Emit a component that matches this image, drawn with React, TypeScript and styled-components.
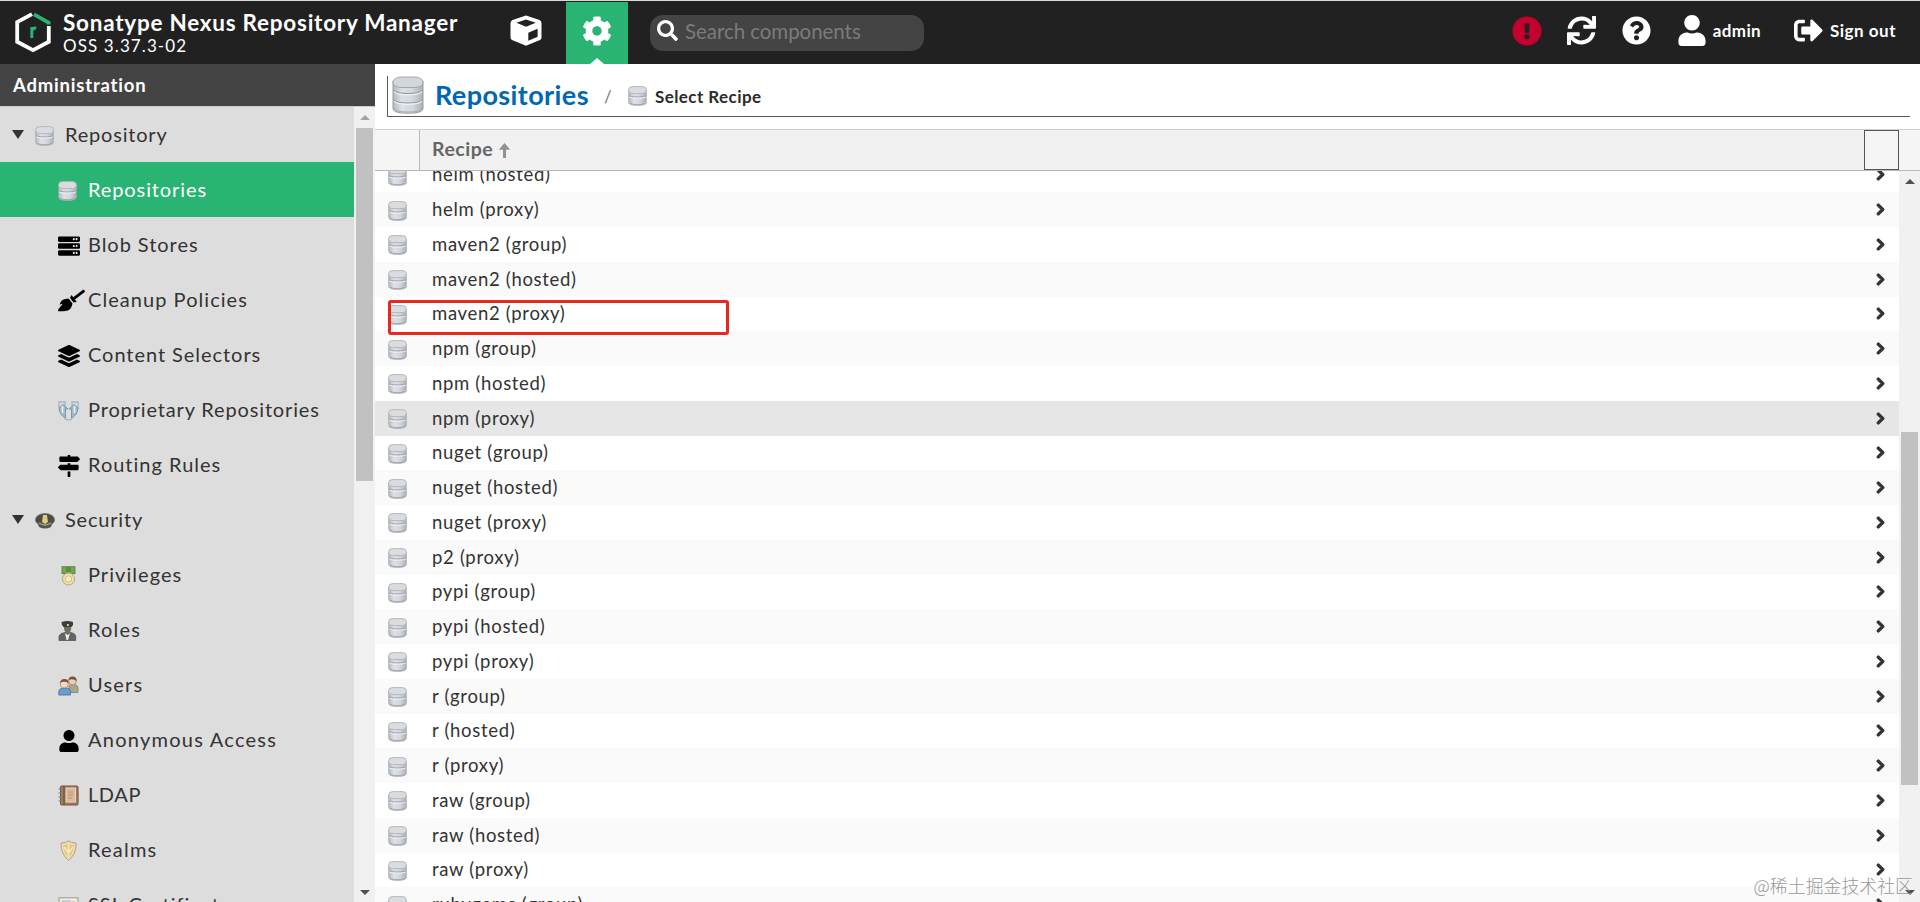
import React from 'react';
import styled, { createGlobalStyle } from 'styled-components';
import {
  FaBroom, FaChevronRight, FaCog, FaExclamationCircle, FaLayerGroup, FaMapSigns,
  FaQuestionCircle, FaSearch, FaServer, FaSignOutAlt, FaSync, FaUser,
} from 'react-icons/fa';

const GlobalStyle = createGlobalStyle`
  * { box-sizing: border-box; }
  body { margin: 0; overflow: hidden; background: #fff; font-family: Lato, "Noto Sans CJK SC", sans-serif; color: #333; }
  svg { display: block; flex: none; }
`;

const Page = styled.div`
  position: relative;
  width: 1920px;
  height: 902px;
  display: flex;
  flex-direction: column;
  overflow: hidden;
`;
const Label = styled.span<{ $size: number; $weight?: number; $spacing?: number }>`
  font-size: ${p => p.$size}px;
  font-weight: ${p => p.$weight ?? 400};
  letter-spacing: ${p => p.$spacing ?? 0}px;
  white-space: nowrap;
`;

/* ---------- top bar ---------- */
const TopBar = styled.header`
  flex: none;
  height: 64px;
  display: flex;
  border-top: 1px solid #d3dbd7;
  background: #212121;
  color: #fff;
`;
const Brand = styled.div`
  width: 495px;
  padding: 10px 0 0 14px;
  display: flex;
  gap: 11px;
`;
const BrandText = styled.div`
  display: flex;
  flex-direction: column;
  line-height: 24px;
`;
const Version = styled(Label)`
  line-height: 21px;
`;
const ModeButton = styled.div<{ $active?: boolean }>`
  position: relative;
  width: ${p => (p.$active ? 62 : 71)}px;
  margin-top: ${p => (p.$active ? 1 : 0)}px;
  padding: ${p => (p.$active ? '14px 0 0 16px' : '14px 0 0 15px')};
  background: ${p => (p.$active ? '#29b473' : 'transparent')};
`;
const Pointer = styled.i`
  position: absolute;
  left: 24px;
  bottom: 0;
  border: 7px solid transparent;
  border-top: 0;
  border-bottom: 6px solid #fff;
`;
const SearchBox = styled.div`
  width: 274px;
  height: 36px;
  margin: 14px 0 0 22px;
  padding-left: 7px;
  display: flex;
  align-items: center;
  gap: 7px;
  border-radius: 13px;
  background: #444;
  color: #7b7b7b;
  line-height: 32px;
  svg { color: #fff; margin-top: -5px; }
  span { margin-top: -4px; }
`;
const Actions = styled.div`
  margin-left: auto;
  padding: 0 24px 3px 0;
  height: 62px;
  display: flex;
  align-items: center;
`;
const Action = styled.div<{ $gap: number; $color?: string }>`
  display: flex;
  align-items: center;
  gap: 7px;
  margin-left: ${p => p.$gap}px;
  color: ${p => p.$color ?? '#fff'};
`;

/* ---------- side navigation ---------- */
const Body = styled.div`
  flex: 1;
  min-height: 0;
  display: flex;
`;
const Side = styled.aside`
  width: 375px;
  display: flex;
  flex-direction: column;
  background: #ddd;
`;
const SideTitle = styled.div`
  flex: none;
  height: 42px;
  padding: 1px 0 0 13px;
  line-height: 40px;
  background: #444;
  color: #fff;
`;
const SideScroll = styled.div`
  flex: 1;
  min-height: 0;
  display: flex;
  border-top: 1px solid #ccc;
`;
const Menu = styled.nav`
  width: 354px;
  overflow: hidden;
`;
const MenuRow = styled.div<{ $child?: boolean; $active?: boolean }>`
  height: 55px;
  padding-left: ${p => (p.$child ? 58 : 12)}px;
  padding-bottom: 2px;
  display: flex;
  align-items: center;
  background: ${p => (p.$active ? '#29b473' : 'transparent')};
  color: ${p => (p.$active ? '#fff' : '#333')};
`;
const MenuIcon = styled.span`
  width: 30px;
  margin-top: 4px;
  display: flex;
  color: #000;
`;
const Caret = styled.i`
  width: 23px;
  margin-top: 2px;
  &::before {
    content: "";
    display: block;
    width: 0;
    border: 6.5px solid transparent;
    border-top: 9px solid #333;
    border-bottom: 0;
  }
`;

/* ---------- scroll bars ---------- */
const Track = styled.div`
  width: 21px;
  flex: none;
  padding: 8px 0 7px;
  display: flex;
  flex-direction: column;
  align-items: center;
  background: #f1f1f1;
`;
const Arrow = styled.i<{ $down?: boolean; $dim?: boolean }>`
  border: 5px solid transparent;
  ${p => (p.$down
    ? 'border-top: 5px solid #505050; border-bottom: 0; margin-top: auto;'
    : `border-bottom: 5px solid ${p.$dim ? '#a3a3a3' : '#505050'}; border-top: 0;`)}
`;
const Thumb = styled.div<{ $top: number }>`
  width: 17px;
  height: 353px;
  margin-top: ${p => p.$top}px;
  background: #c1c1c1;
`;

/* ---------- main content ---------- */
const Main = styled.main`
  flex: 1;
  min-width: 0;
  display: flex;
  flex-direction: column;
`;
const Crumbs = styled.div`
  flex: none;
  height: 41px;
  margin: 12px 10px 12px 12px;
  padding-left: 4px;
  display: flex;
  align-items: center;
  border: solid #5a5a5a;
  border-width: 0 0 1px 1px;
`;
const BigIcon = styled.span`
  margin-top: -2px;
`;
const CrumbTitle = styled(Label)`
  width: 169px;
  margin: -4px 0 0 11px;
  color: #0067b3;
`;
const Slash = styled.span`
  width: 24px;
  font-size: 17px;
  color: #777;
`;
const CrumbLeaf = styled(Label)`
  margin-left: 8px;
  color: #2b2b2b;
`;
const GridHead = styled.div`
  flex: none;
  height: 42px;
  display: flex;
  border: solid #d0d0d0;
  border-width: 1px 0;
  border-bottom-color: #b8b8b8;
  background: #f5f5f5;
`;
const IconHead = styled.div`
  width: 45px;
  border-right: 1px solid #bcbcbc;
`;
const RecipeHead = styled.div`
  flex: 1;
  padding: 0 0 3px 12px;
  display: flex;
  align-items: center;
  gap: 5px;
  background: #f1f1f1;
  color: #666;
  svg { margin-top: 3px; }
`;
const HeadButton = styled.div`
  width: 35px;
  margin-right: 21px;
  border: 1px solid #555;
`;
const GridBody = styled.div`
  flex: 1;
  min-height: 0;
  display: flex;
`;
const Rows = styled.div`
  flex: 1;
  height: 731px;
  overflow: hidden;
`;
const Shift = styled.div`
  margin-top: -13.4px;
`;
const Row = styled.div<{ $tone: string }>`
  height: 34.76px;
  padding-left: 13px;
  padding-right: 12px;
  display: flex;
  align-items: center;
  background: ${p => p.$tone};
  color: #333;
`;
const RowIcon = styled.span`
  width: 44px;
  padding-top: 2px;
`;
const RowText = styled(Label)`
  flex: 1;
  margin-top: -1px;
`;
const Highlight = styled.div`
  position: absolute;
  left: 388px;
  top: 300px;
  width: 341px;
  height: 35px;
  border: 3px solid #e8281f;
  border-radius: 3px;
`;
const Watermark = styled.div`
  position: absolute;
  right: 7px;
  bottom: 4px;
  font: 300 17.9px/26px "Noto Sans CJK SC", sans-serif;
  color: #999;
  white-space: nowrap;
`;

/* ---------- drawings ---------- */
const Gradients = () => (
  <svg width="0" height="0" style={{ position: 'absolute' }}>
    <defs>
      <linearGradient id="steel" x1="0" x2="1">
        <stop offset="0" stopColor="#b4b8c0" />
        <stop offset=".3" stopColor="#dde1e7" />
        <stop offset=".65" stopColor="#d2d6dd" />
        <stop offset="1" stopColor="#acb0b8" />
      </linearGradient>
    </defs>
  </svg>
);
const Database = () => (
  <svg width="19" height="20" viewBox="0 0 19 20">
    <path d="M.7 4V16.5Q1 19.4 9.5 19.4T18.3 16.5V4Z" fill="url(#steel)" stroke="#a9abae" strokeWidth=".8" />
    <rect x=".7" y=".6" width="17.6" height="7" rx="4" ry="3" fill="#dadde0" stroke="#b1b3b5" strokeWidth=".9" />
    <path d="M1 9.4Q2 11 9.5 11T18 9.4" fill="none" stroke="#989da5" strokeWidth="1" />
    <path d="M1.4 11Q3 12.2 9.5 12.2T17.6 11" fill="none" stroke="#f1f3f6" strokeWidth="1" />
    <path d="M2 17.2Q4 18.7 9.5 18.7T17 17.2" fill="none" stroke="#9da1a8" strokeWidth=".9" />
  </svg>
);
const LargeDatabase = () => (
  <svg width="32" height="38" viewBox="0 0 32 38">
    <path d="M1 5V33Q2 37.2 16 37.2T31 33V5Z" fill="url(#steel)" stroke="#999ca0" />
    <rect x="1" y="1" width="30" height="10.5" rx="9" ry="4.8" fill="#d3d6da" stroke="#a5a8ac" />
    <path d="M1.5 14Q4 17.5 16 17.5T30.5 14M1.5 23.5Q4 27 16 27T30.5 23.5" fill="none" stroke="#8f949c" strokeWidth="1.1" />
    <path d="M2 15.5Q4 18.8 16 18.8T30 15.5M2 25Q4 28.3 16 28.3T30 25" fill="none" stroke="#f2f4f7" strokeWidth="1.2" />
    <path d="M2 33Q5 36 16 36T30 33" fill="none" stroke="#aaadb3" />
  </svg>
);
const Logo = () => (
  <svg width="38" height="42" viewBox="0 0 38 42">
    <path d="M18 3.2 3.2 11.2V30.8L19 39.2 34.8 30.8V15" fill="none" stroke="#fff" strokeWidth="3.8" />
    <path d="M20 3.3 34.6 11.6V13.5" fill="none" stroke="#29b473" strokeWidth="3.8" />
    <path d="M17.8 27V16M17.8 20Q18.5 16.6 22.3 17" fill="none" stroke="#29b473" strokeWidth="2.9" />
  </svg>
);
const Cube = () => (
  <svg width="32" height="31" viewBox="0 0 32 31">
    <path d="M16 .5 29.5 5Q31.5 6 31.5 8V22.5Q31.5 24 30 25L16 30.7 2 25Q.5 24 .5 22.5V8Q.5 6 2.5 5Z" fill="#fff" />
    <path d="M6.5 7.8 16 4.5 25.8 7.8 16 11.8ZM18.3 17.8 27.6 13.8V21.8L18.3 25.8Z" fill="#212121" />
  </svg>
);
const SortArrow = () => (
  <svg width="13" height="15" viewBox="0 0 13 15">
    <path d="M6.5 15V3" stroke="#929292" strokeWidth="3" />
    <path d="M.8 6.8 6.5 0 12.2 6.8Z" fill="#929292" />
  </svg>
);
const Hands = () => (
  <svg width="21" height="20" viewBox="0 0 21 20">
    <g fill="none" stroke="#a8b8c0" strokeWidth="1.4">
      <path d="M1 7V1H7V5M14 5V1H20V8M6.5 17.5Q10.5 20.5 14.5 17.5" />
    </g>
    <path d="M1 7 5 3.5 10 8 7.5 8V17Q1.5 14 1 7ZM20 7 16 3.5 11 8 13.5 8V17Q19.5 14 20 7Z" fill="#9ebdca" stroke="#678c9d" strokeWidth=".8" />
    <path d="M4.5 5V12M16.5 5V12" stroke="#eef7fa" strokeWidth="1.5" />
  </svg>
);
const Cap = () => (
  <svg width="20" height="16" viewBox="0 0 20 16">
    <ellipse cx="10" cy="6.8" rx="9.7" ry="6.3" fill="#4b4b46" stroke="#777" strokeWidth=".7" />
    <path d="M2.5 9Q10 6 17.5 9L16 14Q10 17 4 14Z" fill="#555649" />
    <path d="M8 2H12L13 9 10 11 7 9Z" fill="#d8ce7f" />
    <path d="M4 10Q10 14 16 10" fill="none" stroke="#a7a38a" strokeWidth="1.5" />
  </svg>
);
const Medal = () => (
  <svg width="21" height="20" viewBox="0 0 21 20">
    <rect x="4" y=".7" width="13" height="7" fill="#7e9f5a" stroke="#58793b" strokeWidth=".8" />
    <path d="M8 1H13V6H8Z" fill="#4f9342" />
    <circle cx="10.5" cy="13" r="6" fill="#efe3ad" stroke="#b3a773" />
    <circle cx="10.5" cy="13" r="3.2" fill="#f6edc5" stroke="#cfbd82" />
  </svg>
);
const Officer = () => (
  <svg width="21" height="20" viewBox="0 0 21 20">
    <path d="M1 19.5V15Q2 12 7 11.5H12Q17 12 17.7 15V19.5Z" fill="#626466" stroke="#4b4c4e" strokeWidth=".7" />
    <path d="M6 5H13Q14 11.5 9.5 12.5Q5.5 11 6 5Z" fill="#746c62" />
    <path d="M3.5 1Q9.5-1 15 1V4L13.5 6H5.5L4 4Z" fill="#3c3d3d" />
    <path d="M9 3H11L10.5 5H9Z" fill="#d5d2b9" />
    <path d="M7 12 9.7 14 12 12 10 19H8.5Z" fill="#eee" />
  </svg>
);
const People = () => (
  <svg width="21" height="20" viewBox="0 0 21 20">
    <path d="M11 15V10Q12 8 16 8.5 20 9 20 12V16.5H13Z" fill="#a5a98a" stroke="#74785c" strokeWidth=".7" />
    <circle cx="14.5" cy="5" r="3.9" fill="#edcdb5" stroke="#966f52" strokeWidth=".7" />
    <path d="M10.5 4Q11 0 15 .5 19 1 18.5 5Q15 2 10.5 4Z" fill="#77543c" />
    <path d="M.8 19V15Q1.5 12 6.5 12 12 12 12.5 15V19Z" fill="#6c9bcd" stroke="#456f9e" strokeWidth=".8" />
    <circle cx="6.3" cy="8" r="4" fill="#f2d7c1" stroke="#9d775b" strokeWidth=".7" />
    <path d="M2 7Q2.5 3 6.5 3T10.6 7Q6 4.5 2 7Z" fill="#8a4d38" />
  </svg>
);
const Notebook = () => (
  <svg width="21" height="21" viewBox="0 0 21 21">
    <rect x="2.5" y="1" width="17.5" height="19" rx="1" fill="#9e7b5c" stroke="#715943" />
    <rect x="8" y="3" width="9.5" height="14" fill="#d9b99c" stroke="#ead3bd" />
    <path d="M10 7H15M10 10H15M10 13H14" stroke="#bb9273" />
    <path d="M6 1V20" stroke="#6c5137" strokeWidth="1.2" />
    <path d="M.5 4H4M.5 8H4M.5 12H4M.5 16H4" stroke="#858078" strokeWidth="1.2" />
    <path d="M20 8V12" stroke="#c65945" /><path d="M20 13V17" stroke="#5c9465" />
  </svg>
);
const Shield = () => (
  <svg width="21" height="21" viewBox="0 0 21 21">
    <path d="M10.5.8Q13 3 18 3.2 18.5 14 10.5 20.3 2.5 14 3 3.2 8 3 10.5.8Z" fill="#eadfb6" stroke="#afa17c" />
    <path d="M10.5 3.5Q13 5 16 5.2 15.5 13 10.5 17.5 5.5 13 5 5.2 8 5 10.5 3.5Z" fill="#e5c77e" />
    <path d="M10.5 4V17M6 7 10.5 13 15 7" fill="none" stroke="#f6ebc6" strokeWidth="1.4" />
  </svg>
);
const Certificate = () => (
  <svg width="21" height="18" viewBox="0 0 21 18">
    <rect x="1" y=".8" width="19" height="15.5" fill="#eeece5" stroke="#9b9b93" />
    <path d="M4 4H13M4 7H12" stroke="#aaa" /><circle cx="15.5" cy="7" r="2.8" fill="#d6bf76" />
  </svg>
);

const menu: { text: string; icon: React.ReactNode; group?: boolean; active?: boolean; spacing?: number }[] = [
  { text: 'Repository', icon: <Database />, group: true, spacing: 0.8 },
  { text: 'Repositories', icon: <Database />, active: true, spacing: 0.9 },
  { text: 'Blob Stores', icon: <FaServer size={22} /> },
  { text: 'Cleanup Policies', icon: <FaBroom size={27} />, spacing: 1.05 },
  { text: 'Content Selectors', icon: <FaLayerGroup size={22} /> },
  { text: 'Proprietary Repositories', icon: <Hands />, spacing: 0.85 },
  { text: 'Routing Rules', icon: <FaMapSigns size={22} />, spacing: 1 },
  { text: 'Security', icon: <Cap />, group: true, spacing: 0.8 },
  { text: 'Privileges', icon: <Medal />, spacing: 1.05 },
  { text: 'Roles', icon: <Officer />, spacing: 1.2 },
  { text: 'Users', icon: <People />, spacing: 1.2 },
  { text: 'Anonymous Access', icon: <FaUser size={22} />, spacing: 1.25 },
  { text: 'LDAP', icon: <Notebook />, spacing: 0.6 },
  { text: 'Realms', icon: <Shield />, spacing: 1.2 },
  { text: 'SSL Certificates', icon: <Certificate />, spacing: 1 },
];

const recipes = [
  'helm (hosted)', 'helm (proxy)', 'maven2 (group)', 'maven2 (hosted)', 'maven2 (proxy)',
  'npm (group)', 'npm (hosted)', 'npm (proxy)', 'nuget (group)', 'nuget (hosted)', 'nuget (proxy)',
  'p2 (proxy)', 'pypi (group)', 'pypi (hosted)', 'pypi (proxy)', 'r (group)', 'r (hosted)', 'r (proxy)',
  'raw (group)', 'raw (hosted)', 'raw (proxy)', 'rubygems (group)',
];
const hovered = 'npm (proxy)';

export default function App() {
  return (
    <Page>
      <GlobalStyle />
      <Gradients />
      <TopBar>
        <Brand>
          <Logo />
          <BrandText>
            <Label $size={22.5} $weight={700} $spacing={0.75}>Sonatype Nexus Repository Manager</Label>
            <Version $size={17} $spacing={1.1}>OSS 3.37.3-02</Version>
          </BrandText>
        </Brand>
        <ModeButton><Cube /></ModeButton>
        <ModeButton $active><FaCog size={30} /><Pointer /></ModeButton>
        <SearchBox>
          <FaSearch size={21} />
          <Label $size={20.5} $spacing={-0.05}>Search components</Label>
        </SearchBox>
        <Actions>
          <Action $gap={0} $color="#c4002f"><FaExclamationCircle size={30} /></Action>
          <Action $gap={25}><FaSync size={29} /></Action>
          <Action $gap={26}><FaQuestionCircle size={29} /></Action>
          <Action $gap={27}><FaUser size={31} style={{ width: 28 }} /><Label $size={17} $weight={700} $spacing={0.35}>admin</Label></Action>
          <Action $gap={33}><FaSignOutAlt size={29} /><Label $size={17} $weight={700} $spacing={0.5}>Sign out</Label></Action>
        </Actions>
      </TopBar>
      <Body>
        <Side>
          <SideTitle><Label $size={18.5} $weight={700} $spacing={0.8}>Administration</Label></SideTitle>
          <SideScroll>
            <Menu>
              {menu.map(m => (
                <MenuRow key={m.text} $child={!m.group} $active={m.active}>
                  {m.group && <Caret />}
                  <MenuIcon>{m.icon}</MenuIcon>
                  <Label $size={20} $spacing={m.spacing ?? 0.95}>{m.text}</Label>
                </MenuRow>
              ))}
            </Menu>
            <Track><Arrow $dim /><Thumb $top={8} /><Arrow $down /></Track>
          </SideScroll>
        </Side>
        <Main>
          <Crumbs>
            <BigIcon><LargeDatabase /></BigIcon>
            <CrumbTitle $size={27} $weight={700} $spacing={0.4}>Repositories</CrumbTitle>
            <Slash>/</Slash>
            <Database />
            <CrumbLeaf $size={17} $weight={700} $spacing={0.42}>Select Recipe</CrumbLeaf>
          </Crumbs>
          <GridHead>
            <IconHead />
            <RecipeHead><Label $size={19.5} $weight={700} $spacing={0.5}>Recipe</Label><SortArrow /></RecipeHead>
            <HeadButton />
          </GridHead>
          <GridBody>
            <Rows>
              <Shift>
                {recipes.map((r, i) => (
                  <Row key={r} $tone={r === hovered ? '#e6e6e6' : i % 2 ? '#fafafa' : '#fff'}>
                    <RowIcon><Database /></RowIcon>
                    <RowText $size={18.5} $spacing={0.68}>{r}</RowText>
                    <FaChevronRight size={13} stroke="#333" strokeWidth={50} />
                  </Row>
                ))}
              </Shift>
            </Rows>
            <Track><Arrow /><Thumb $top={248} /><Arrow $down /></Track>
          </GridBody>
        </Main>
      </Body>
      <Highlight />
      <Watermark>@稀土掘金技术社区</Watermark>
    </Page>
  );
}
